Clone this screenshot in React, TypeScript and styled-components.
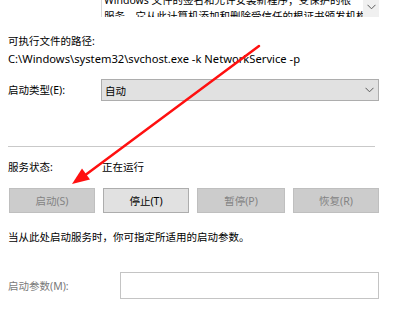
import styled, { createGlobalStyle } from "styled-components";

const GlobalStyle = createGlobalStyle`
	html, body {
		margin: 0;
		padding: 0;
		background: #ffffff;
	}
	body {
		font-family: "Noto Sans", "Noto Sans CJK SC", sans-serif;
		font-size: 10.5px;
		color: #000000;
	}
`;

const Page = styled.div`
	position: relative;
	width: 400px;
	height: 329px;
	overflow: hidden;
	padding: 0 21px 0 8px;
	box-sizing: border-box;
`;

const DescBox = styled.div`
	margin-left: 93px;
	height: 17px;
	display: flex;
	border-left: 1px solid #d9d9d9;
	overflow: hidden;
`;

const DescText = styled.div`
	flex: 1;
	padding-left: 2px;
	margin-top: -8px;
	line-height: 16px;
	white-space: nowrap;
	overflow: hidden;
`;

const ScrollBar = styled.div`
	width: 16px;
	background: #f0f0f0;
	display: flex;
	align-items: center;
	justify-content: center;
	padding-bottom: 4px;
	box-sizing: border-box;
`;

const Label = styled.div<{ $top?: number; $muted?: boolean; $size?: number }>`
	margin-top: ${(p) => p.$top ?? 0}px;
	line-height: 16px;
	height: 16px;
	font-size: ${(p) => (p.$size ? `${p.$size}px` : "inherit")};
	color: ${(p) => (p.$muted ? "#7a7a7a" : "#000000")};
	white-space: nowrap;
`;

const FieldRow = styled.div<{ $top: number; $labelWidth: number }>`
	margin-top: ${(p) => p.$top}px;
	display: grid;
	grid-template-columns: ${(p) => p.$labelWidth}px 1fr;
	align-items: center;
`;

const Select = styled.div`
	height: 22px;
	background: #e1e1e1;
	border: 1px solid #adadad;
	box-sizing: border-box;
	display: flex;
	align-items: center;
	justify-content: space-between;
	padding: 0 4px 0 3px;
`;

const TextInput = styled.div`
	height: 27px;
	border: 1px solid #c4c4c4;
	background: #ffffff;
	box-sizing: border-box;
`;

const Separator = styled.hr`
	margin: 45px 4px 0 0;
	border: none;
	border-top: 1px solid #c9c9c9;
	height: 0;
`;

const ButtonRow = styled.div`
	margin-top: 13px;
	display: grid;
	grid-template-columns: 86px 86px 88px 86px;
	column-gap: 8px;
	padding-left: 1px;
`;

const Button = styled.div<{ $disabled?: boolean }>`
	height: 25px;
	box-sizing: border-box;
	display: flex;
	align-items: center;
	justify-content: center;
	border: 1px solid ${(p) => (p.$disabled ? "#bfbfbf" : "#adadad")};
	background: ${(p) => (p.$disabled ? "#cccccc" : "#e1e1e1")};
	color: ${(p) => (p.$disabled ? "#838383" : "#000000")};
`;

const ArrowLayer = styled.svg`
	position: absolute;
	left: 0;
	top: 0;
	pointer-events: none;
`;

function Chevron() {
	return (
		<svg width="9" height="6" viewBox="0 0 9 6">
			<path d="M0.5 0.8 L4.5 4.8 L8.5 0.8" fill="none" stroke="#5a5a5a" strokeWidth="1" />
		</svg>
	);
}

export default function App() {
	return (
		<>
			<GlobalStyle />
			<Page>
				<DescBox>
					<DescText>
						Windows 文件的签名和允许安装新程序；受保护的根
						<br />
						服务。它从此计算机添加和删除受信任的根证书颁发机构
					</DescText>
					<ScrollBar>
						<Chevron />
					</ScrollBar>
				</DescBox>
				<Label $top={16}>可执行文件的路径:</Label>
				<Label $top={2} $size={11.2}>C:\Windows\system32\svchost.exe -k NetworkService -p</Label>
				<FieldRow $top={12} $labelWidth={93}>
					<Label>启动类型(E):</Label>
					<Select>
						<span>自动</span>
						<Chevron />
					</Select>
				</FieldRow>
				<Separator />
				<FieldRow $top={12} $labelWidth={94}>
					<Label>服务状态:</Label>
					<Label>正在运行</Label>
				</FieldRow>
				<ButtonRow>
					<Button $disabled>启动(S)</Button>
					<Button>停止(T)</Button>
					<Button $disabled>暂停(P)</Button>
					<Button $disabled>恢复(R)</Button>
				</ButtonRow>
				<Label $top={16}>当从此处启动服务时，你可指定所适用的启动参数。</Label>
				<FieldRow $top={27} $labelWidth={112}>
					<Label $muted>启动参数(M):</Label>
					<TextInput />
				</FieldRow>
				<ArrowLayer width="400" height="329">
					<line x1="259" y1="46" x2="84" y2="176" stroke="#ff1010" strokeWidth="2.5" strokeLinecap="round" />
					<polygon points="72,184 90,179.6 82,168.6" fill="#ff1010" />
				</ArrowLayer>
			</Page>
		</>
	);
}
